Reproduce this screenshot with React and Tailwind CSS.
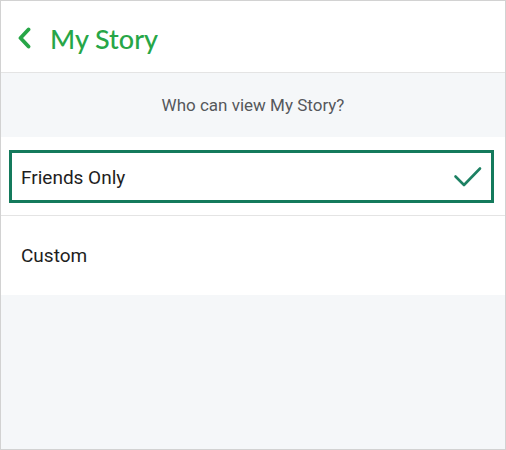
export default function App() {
  return (
    <div className="w-[506px] h-[450px] border border-[#d2d2d2] bg-[#f5f7f9] flex flex-col overflow-hidden" style={{ fontFamily: "Roboto, 'Liberation Sans', sans-serif" }}>
      <div className="h-[72px] bg-white flex items-center border-b border-[#e4e4e4] shrink-0 pt-[3px]">
        <svg width="15" height="22" viewBox="0 0 15 22" className="ml-[16px]">
          <path d="M11.5 2.5 L3.5 11 L11.5 19.5" fill="none" stroke="#27a647" strokeWidth="3.8" strokeLinecap="round" strokeLinejoin="round" />
        </svg>
        <span className="ml-[18px] text-[27px] text-[#27a647] leading-none" style={{ fontFamily: "Lato, 'Open Sans', sans-serif", fontWeight: 500 }}>My Story</span>
      </div>
      <div className="h-[64px] flex items-center justify-center text-[17px] text-[#55585c] shrink-0 pt-[2px]">
        Who can view My Story?
      </div>
      <div className="bg-white shrink-0">
        <div className="pt-[13px] pb-[12px] border-b border-[#e4e4e4]">
          <div className="ml-[8px] mr-[11px] h-[53px] border-[3px] border-[#147a5c] flex items-center justify-between pl-[9px] pr-[8px]">
            <span className="text-[19px] text-[#1e1e1e] pt-[3px]">Friends Only</span>
            <svg width="30" height="24" viewBox="0 0 30 24">
              <path d="M2.5 11.5 L11 20 L27 3.5" fill="none" stroke="#1d8163" strokeWidth="2.6" strokeLinecap="round" strokeLinejoin="round" />
            </svg>
          </div>
        </div>
        <div className="h-[79px] flex items-center pl-[20px] pt-[2px] text-[19px] text-[#1e1e1e]">Custom</div>
      </div>
    </div>
  );
}
